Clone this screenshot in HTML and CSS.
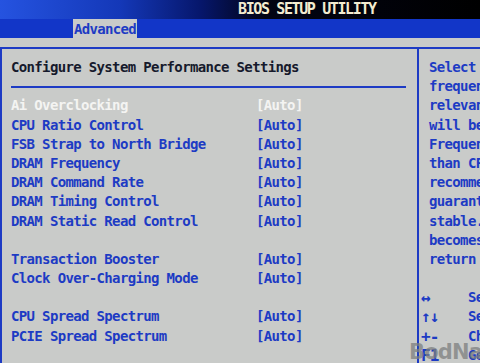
FILE: index.html
```html
<!DOCTYPE html>
<html lang="en">
<head>
    <meta charset="UTF-8">
    <title>BIOS Setup Utility</title>
    <link rel="stylesheet" href="styles.css">
</head>
<body>
    <div class="screen">
        <div class="titlebar"><span class="title">BIOS SETUP UTILITY</span></div>
        <div class="tabs"><span class="tab">Advanced</span></div>
        <div class="strip"></div>
        <div class="frame">
            <div class="main">
                <h1>Configure System Performance Settings</h1>
                <div class="rule-row"><div class="rule"></div></div>
                <ul class="items">
                    <li class="selected"><span>Ai Overclocking</span><span>[Auto]</span></li>
                    <li><span>CPU Ratio Control</span><span>[Auto]</span></li>
                    <li><span>FSB Strap to North Bridge</span><span>[Auto]</span></li>
                    <li><span>DRAM Frequency</span><span>[Auto]</span></li>
                    <li><span>DRAM Command Rate</span><span>[Auto]</span></li>
                    <li><span>DRAM Timing Control</span><span>[Auto]</span></li>
                    <li><span>DRAM Static Read Control</span><span>[Auto]</span></li>
                    <li class="blank"></li>
                    <li><span>Transaction Booster</span><span>[Auto]</span></li>
                    <li><span>Clock Over-Charging Mode</span><span>[Auto]</span></li>
                    <li class="blank"></li>
                    <li><span>CPU Spread Spectrum</span><span>[Auto]</span></li>
                    <li><span>PCIE Spread Spectrum</span><span>[Auto]</span></li>
                </ul>
            </div>
            <div class="help">
                <div class="help-text">
                    <p>Select the target CPU</p>
                    <p>frequency, and the</p>
                    <p>relevant parameters</p>
                    <p>will be auto-adjusted.</p>
                    <p>Frequencies higher</p>
                    <p>than CPU manufacturer</p>
                    <p>recommends are not</p>
                    <p>guaranteed to be</p>
                    <p>stable. If the system</p>
                    <p>becomes unstable,</p>
                    <p>return to the default.</p>
                    <p>&nbsp;</p>
                </div>
                <div class="keys">
                    <p><span class="key">&harr;</span>Select Screen</p>
                    <p><span class="key">&uarr;&darr;</span>Select Item</p>
                    <p><span class="key">+-</span>Change Option</p>
                    <p><span class="key">F1</span>General Help</p>
                </div>
            </div>
        </div>
        <div class="watermark">BodNara</div>
    </div>
</body>
</html>
```

FILE: styles.css
```css
body {
    margin: 0;
    padding: 0;
    background-color: #c9cbc9;
    font-family: "DejaVu Sans Mono", "Liberation Mono", monospace;
    font-size: 14px;
    letter-spacing: -0.65px;
    font-weight: bold;
    color: #1d3bc4;
    overflow: hidden;
}

.screen {
    position: relative;
    width: 480px;
    height: 363px;
    overflow: hidden;
}

.titlebar {
    height: 19px;
    line-height: 19px;
    padding-left: 238px;
    background: linear-gradient(90deg, #2553e0 0, #1438b8 25%, #06166a 42%, #020414 55%, #000 100%);
}

.title {
    color: #f3ecd0;
    font-size: 15px;
    letter-spacing: -1.38px;
}

.tabs {
    height: 19px;
    background-color: #1236c8;
}

.tab {
    display: inline-block;
    margin-left: 73px;
    width: 64px;
    height: 19px;
    line-height: 20px;
    text-align: center;
    background-color: #c9cbc9;
    color: #1d3bc4;
}

.strip {
    height: 9px;
}

.frame {
    display: flex;
    height: 314px;
    border-top: 2px solid #1d3bc4;
    border-left: 2px solid #1d3bc4;
}

.main {
    width: 417px;
    padding: 9px 11px 0 9px;
    box-sizing: border-box;
    border-right: 2px solid #1d3bc4;
    line-height: 19.2px;
}

h1 {
    margin: 0;
    font-size: 14px;
    color: #161a2c;
}

.rule-row {
    height: 19.2px;
    display: flex;
    align-items: center;
}

.rule {
    width: 100%;
    height: 2px;
    background-color: #1d3bc4;
}

.items {
    list-style: none;
    margin: 0;
    padding: 0;
}

.items li {
    display: grid;
    grid-template-columns: 245px auto;
    height: 19.2px;
    white-space: nowrap;
}

.items li.selected {
    color: #f4f4f2;
}

.help {
    flex: 1;
    padding-top: 9px;
    line-height: 19.2px;
    white-space: nowrap;
    overflow: hidden;
}

.help p {
    margin: 0;
    height: 19.2px;
}

.help-text {
    padding-left: 10px;
}

.keys {
    padding-left: 2px;
}

.key {
    display: inline-block;
    width: 47px;
    font-size: 16px;
    letter-spacing: -1px;
    vertical-align: top;
}

/* marca de agua de la foto */
.watermark {
    position: absolute;
    left: 409px;
    top: 340px;
    font-family: "DejaVu Sans", sans-serif;
    font-size: 21px;
    font-weight: bold;
    letter-spacing: -0.8px;
    color: rgba(125, 127, 127, 0.75);
}
```
